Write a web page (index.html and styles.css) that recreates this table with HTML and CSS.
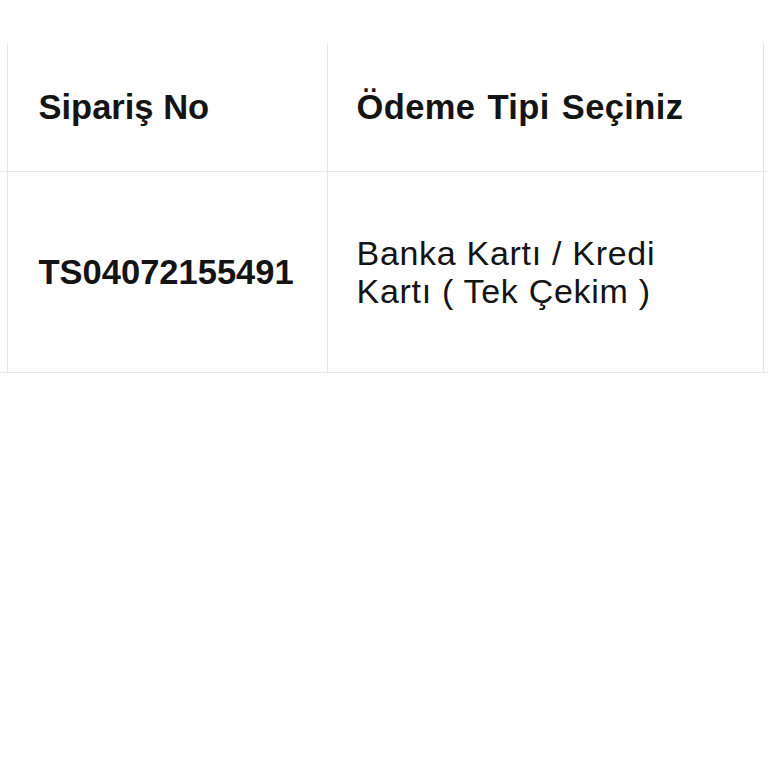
FILE: index.html
```html
<!DOCTYPE html>
<html lang="tr">
<head>
    <meta charset="UTF-8">
    <meta name="viewport" content="width=device-width, initial-scale=1.0">
    <title>Sipariş Bilgileri</title>
    <link rel="stylesheet" href="styles.css">
</head>
<body>
    <div class="order-wrap">
        <table class="order-table">
            <colgroup>
                <col class="col-edge">
                <col class="col-order">
                <col class="col-payment">
                <col class="col-rest">
            </colgroup>
            <thead>
                <tr class="head-row">
                    <th class="edge"></th>
                    <th>Sipariş No</th>
                    <th class="pay-head">Ödeme Tipi Seçiniz</th>
                    <th class="edge"></th>
                </tr>
            </thead>
            <tbody>
                <tr class="body-row">
                    <td class="edge"></td>
                    <td class="order-no">TS04072155491</td>
                    <td class="payment">Banka Kartı / Kredi Kartı ( Tek Çekim )</td>
                    <td class="edge"></td>
                </tr>
            </tbody>
        </table>
    </div>
</body>
</html>
```

FILE: styles.css
```css
html, body {
    margin: 0;
    padding: 0;
    background: #fff;
    overflow: hidden;
}
body {
    font-family: "Liberation Sans", Arial, sans-serif;
    color: #141414;
}
.order-wrap {
    padding-top: 43px;
}
.order-table {
    border-collapse: collapse;
    table-layout: fixed;
    width: 768px;
}
.col-edge { width: 7px; }
.col-order { width: 320px; }
.col-payment { width: 436px; }
.col-rest { width: 5px; }

.order-table th,
.order-table td {
    border-left: 1px solid #e6e6e6;
    border-right: 1px solid #e6e6e6;
    border-bottom: 1px solid #e6e6e6;
    padding: 0 60px 0 31px;
    text-align: left;
    vertical-align: middle;
}
.order-table .edge {
    padding: 0;
}
.order-table tr > :first-child { border-left: none; }
.order-table tr > :last-child { border-right: none; }

.head-row th {
    height: 128px;
    font-size: 34.5px;
    font-weight: bold;
}
.order-table .pay-head,
.order-table .payment {
    padding-left: 29px;
}
.pay-head {
    letter-spacing: 0.4px;
    word-spacing: 2px;
}
.body-row td {
    height: 200px;
}
.order-no {
    font-size: 34.5px;
    font-weight: bold;
}
.payment {
    font-size: 34px;
    line-height: 38px;
    letter-spacing: 0.7px;
}
```
